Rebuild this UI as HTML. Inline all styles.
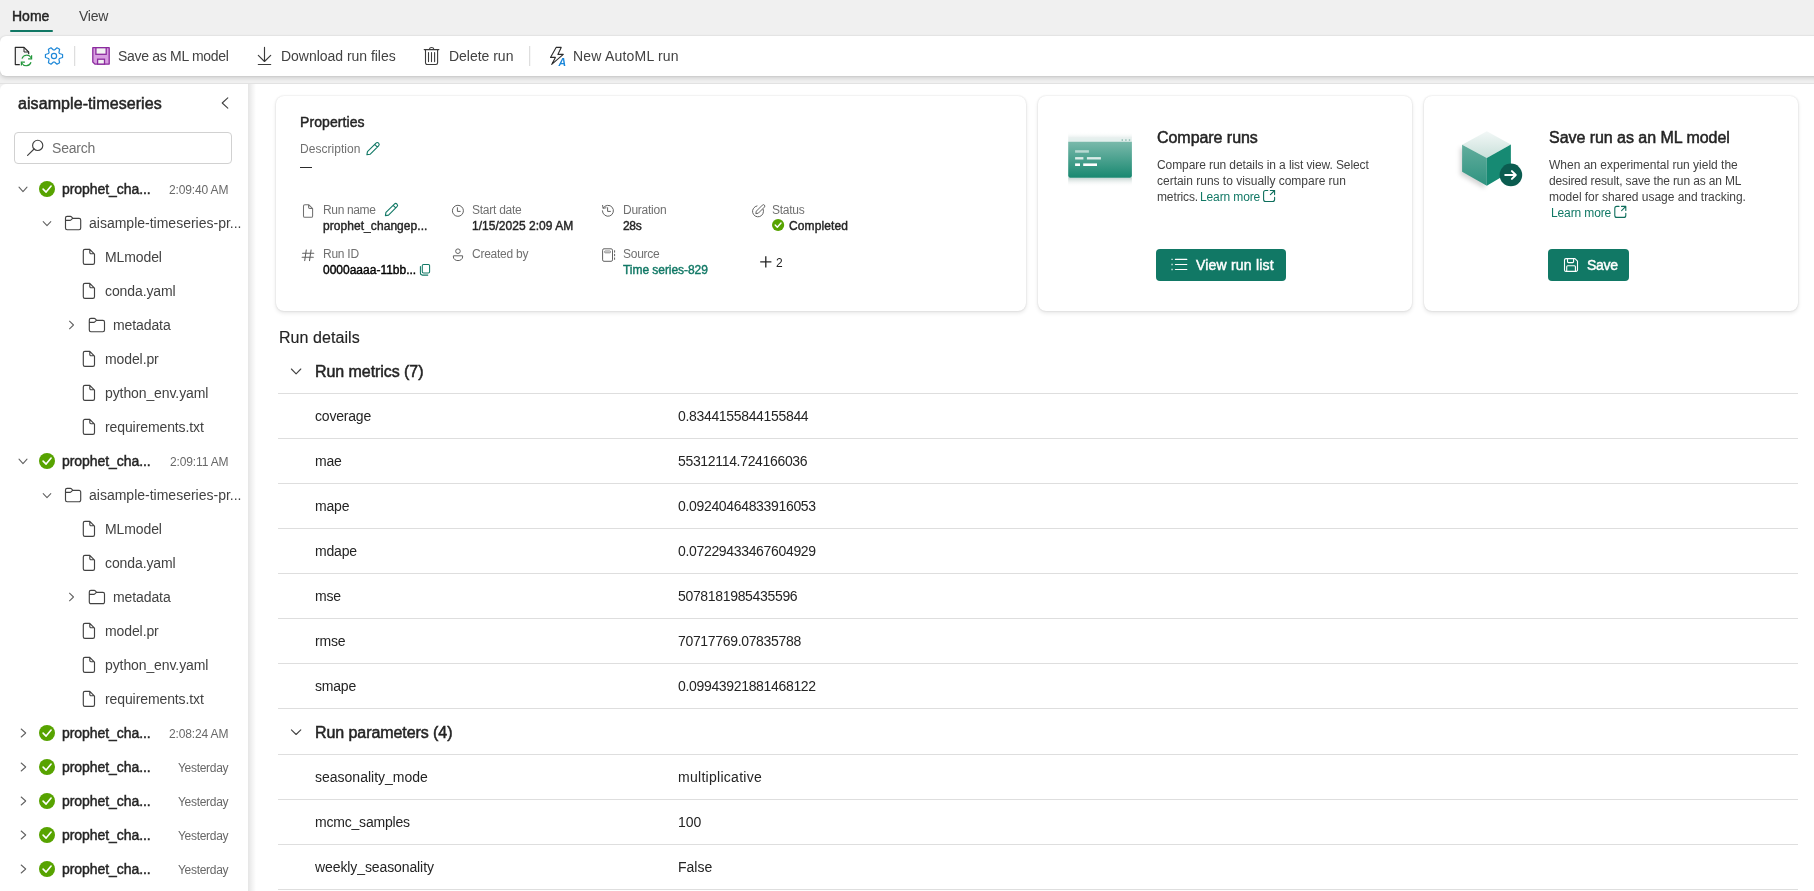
<!DOCTYPE html>
<html><head><meta charset="utf-8">
<style>
*{box-sizing:border-box;margin:0;padding:0}
html,body{width:1814px;height:891px;overflow:hidden;background:#f0f0f0;font-family:"Liberation Sans",sans-serif;color:#242424}
.a{position:absolute}
.t{position:absolute;line-height:1;white-space:nowrap;will-change:transform}
#ov{position:absolute;left:0;top:0;width:1814px;height:891px;overflow:visible}
#toolbar{position:absolute;left:0;top:36px;width:1840px;height:40px;background:#fff;border-radius:6px 0 0 6px;box-shadow:0 0 2px rgba(0,0,0,.12),0 2px 4px rgba(0,0,0,.14)}
#side{position:absolute;left:0;top:84px;width:248px;height:807px;background:#fff;border-top-left-radius:6px}
#main{position:absolute;left:248px;top:84px;width:1566px;height:807px;background:#fff}
#mainshadow{position:absolute;left:248px;top:84px;width:8px;height:807px;background:linear-gradient(to right,rgba(0,0,0,.10),rgba(0,0,0,0))}
.card{position:absolute;top:96px;height:215px;background:#fff;border-radius:8px;box-shadow:0 0 2px rgba(0,0,0,.14),0 2px 4px rgba(0,0,0,.10)}
.tb{font-size:14px;color:#424242;top:49px;letter-spacing:-0.2px}
.tr{font-size:14px;color:#424242;letter-spacing:-0.1px}
.rb{font-size:14px;-webkit-text-stroke-width:0.45px;color:#242424;letter-spacing:-0.06px}
.ts{font-size:12px;color:#686868;letter-spacing:-0.2px}
.line{position:absolute;left:278px;width:1520px;height:1px;background:#dedede}
.lbl{font-size:12px;color:#707070;letter-spacing:-0.25px}
.val{font-size:12px;-webkit-text-stroke-width:0.4px;color:#242424;letter-spacing:0px}
.mk{font-size:14px;color:#242424;letter-spacing:-0.2px}
.btn{position:absolute;top:249px;height:32px;background:#117865;border-radius:4px}
.bt{font-size:14px;-webkit-text-stroke-width:0.45px;color:#fff;letter-spacing:0px}
.desc{font-size:12px;color:#424242}
.lnk{color:#117865}
</style></head><body>
<!-- tabs -->
<div class="t" style="left:12px;top:9px;font-size:14px;-webkit-text-stroke-width:0.45px;color:#242424;letter-spacing:0px">Home</div>
<div class="t" style="left:79px;top:9px;font-size:14px;color:#424242;letter-spacing:-0.25px">View</div>
<div class="a" style="left:10px;top:29.5px;width:43px;height:2.5px;background:#117865;border-radius:2px"></div>

<div id="toolbar"></div>
<div id="side"></div>
<div id="main"></div>
<div id="mainshadow"></div>
<div class="a" style="left:0;top:83px;width:1814px;height:1px;background:rgba(0,0,0,.055)"></div>

<!-- toolbar text -->
<div class="t tb" style="left:117.5px;letter-spacing:-0.3px">Save as ML model</div>
<div class="t tb" style="left:281px;letter-spacing:-0.03px">Download run files</div>
<div class="t tb" style="left:449px;letter-spacing:-0.02px">Delete run</div>
<div class="t tb" style="left:573px;letter-spacing:0.2px">New AutoML run</div>

<!-- sidebar -->
<div class="t" style="left:18px;top:96px;font-size:16px;-webkit-text-stroke-width:0.5px;color:#242424;letter-spacing:0.08px">aisample-timeseries</div>
<div class="a" style="left:14px;top:132px;width:218px;height:32px;border:1px solid #d1d1d1;border-radius:4px;background:#fff"></div>
<div class="t" style="left:51.5px;top:140.8px;font-size:14px;color:#707070;letter-spacing:-0.2px">Search</div>

<div class="t rb" style="left:61.6px;top:181.65px">prophet_cha...</div>
<div class="t ts" style="right:1585.7px;top:183.55px;letter-spacing:-0.14px">2:09:40 AM</div>
<div class="t tr" style="left:89.2px;top:215.65px;letter-spacing:0px">aisample-timeseries-pr...</div>
<div class="t tr" style="left:105.3px;top:249.65px">MLmodel</div>
<div class="t tr" style="left:105.3px;top:283.65px">conda.yaml</div>
<div class="t tr" style="left:113.4px;top:317.65px">metadata</div>
<div class="t tr" style="left:105.3px;top:351.65px">model.pr</div>
<div class="t tr" style="left:105.3px;top:385.65px">python_env.yaml</div>
<div class="t tr" style="left:105.3px;top:419.65px">requirements.txt</div>
<div class="t rb" style="left:61.6px;top:453.65px">prophet_cha...</div>
<div class="t ts" style="right:1585.7px;top:455.55px;letter-spacing:-0.14px">2:09:11 AM</div>
<div class="t tr" style="left:89.2px;top:487.65px;letter-spacing:0px">aisample-timeseries-pr...</div>
<div class="t tr" style="left:105.3px;top:521.65px">MLmodel</div>
<div class="t tr" style="left:105.3px;top:555.65px">conda.yaml</div>
<div class="t tr" style="left:113.4px;top:589.65px">metadata</div>
<div class="t tr" style="left:105.3px;top:623.65px">model.pr</div>
<div class="t tr" style="left:105.3px;top:657.65px">python_env.yaml</div>
<div class="t tr" style="left:105.3px;top:691.65px">requirements.txt</div>
<div class="t rb" style="left:61.6px;top:725.65px">prophet_cha...</div>
<div class="t ts" style="right:1585.7px;top:727.55px;letter-spacing:-0.14px">2:08:24 AM</div>
<div class="t rb" style="left:61.6px;top:759.65px">prophet_cha...</div>
<div class="t ts" style="right:1585.7px;top:761.55px;letter-spacing:-0.3px">Yesterday</div>
<div class="t rb" style="left:61.6px;top:793.65px">prophet_cha...</div>
<div class="t ts" style="right:1585.7px;top:795.55px;letter-spacing:-0.3px">Yesterday</div>
<div class="t rb" style="left:61.6px;top:827.65px">prophet_cha...</div>
<div class="t ts" style="right:1585.7px;top:829.55px;letter-spacing:-0.3px">Yesterday</div>
<div class="t rb" style="left:61.6px;top:861.65px">prophet_cha...</div>
<div class="t ts" style="right:1585.7px;top:863.55px;letter-spacing:-0.3px">Yesterday</div>

<!-- cards -->
<div class="card" style="left:276px;width:750px"></div>
<div class="card" style="left:1038px;width:374px"></div>
<div class="card" style="left:1424px;width:374px"></div>

<!-- properties card -->
<div class="t" style="left:300.3px;top:115.15px;font-size:14px;-webkit-text-stroke-width:0.45px;color:#242424;letter-spacing:0.09px">Properties</div>
<div class="t lbl" style="left:300.3px;top:142.94px;letter-spacing:0.04px">Description</div>
<div class="a" style="left:300px;top:167px;width:12px;height:1.3px;background:#2b2b2b"></div>

<div class="t lbl" style="left:322.6px;top:203.84px;letter-spacing:-0.35px">Run name</div>
<div class="t lbl" style="left:471.9px;top:203.84px">Start date</div>
<div class="t lbl" style="left:622.6px;top:203.84px">Duration</div>
<div class="t lbl" style="left:772px;top:203.84px">Status</div>
<div class="t lbl" style="left:322.6px;top:247.6px">Run ID</div>
<div class="t lbl" style="left:471.9px;top:247.6px">Created by</div>
<div class="t lbl" style="left:622.6px;top:247.6px">Source</div>

<div class="t val" style="left:322.6px;top:219.84px;letter-spacing:0.06px">prophet_changep...</div>
<div class="t val" style="left:471.9px;top:219.84px;letter-spacing:0.03px">1/15/2025 2:09 AM</div>
<div class="t val" style="left:622.6px;top:219.84px;letter-spacing:-0.3px">28s</div>
<div class="t val" style="left:789.3px;top:219.84px;letter-spacing:0.1px">Completed</div>
<div class="t val" style="left:322.6px;top:264px;letter-spacing:0px;color:#000">0000aaaa-11bb...</div>
<div class="t val" style="left:622.6px;top:264px;letter-spacing:-0.05px;color:#117865">Time series-829</div>
<div class="t" style="left:776.3px;top:256.84px;font-size:12px;color:#242424">2</div>

<!-- compare card -->
<div class="t" style="left:1156.7px;top:130.26px;font-size:16px;-webkit-text-stroke-width:0.5px;color:#242424;letter-spacing:-0.05px">Compare runs</div>
<div class="t desc" style="left:1156.7px;top:159.04px;letter-spacing:-0.087px">Compare run details in a list view. Select</div>
<div class="t desc" style="left:1156.7px;top:175.04px;letter-spacing:-0.014px">certain runs to visually compare run</div>
<div class="t desc" style="left:1156.7px;top:191.04px;letter-spacing:-0.125px">metrics.</div>
<div class="t desc lnk" style="left:1199.6px;top:191.04px;letter-spacing:-0.127px">Learn more</div>
<div class="btn" style="left:1156px;width:130px"></div>
<div class="t bt" style="left:1195.8px;top:257.95px;letter-spacing:0.2px">View run list</div>

<!-- save card -->
<div class="t" style="left:1548.6px;top:130.26px;font-size:16px;-webkit-text-stroke-width:0.5px;color:#242424;letter-spacing:-0.04px">Save run as an ML model</div>
<div class="t desc" style="left:1548.6px;top:159.04px;letter-spacing:0px">When an experimental run yield the</div>
<div class="t desc" style="left:1548.6px;top:175.04px;letter-spacing:-0.136px">desired result, save the run as an ML</div>
<div class="t desc" style="left:1548.6px;top:191.04px;letter-spacing:-0.034px">model for shared usage and tracking.</div>
<div class="t desc lnk" style="left:1550.5px;top:206.74px;letter-spacing:-0.127px">Learn more</div>
<div class="btn" style="left:1548px;width:81px"></div>
<div class="t bt" style="left:1587.3px;top:257.95px;letter-spacing:-0.3px">Save</div>

<!-- run details -->
<div class="t" style="left:278.6px;top:330.16px;font-size:16px;color:#242424;-webkit-text-stroke-width:0.15px;letter-spacing:0.06px">Run details</div>
<div class="t" style="left:314.5px;top:364.1px;font-size:16px;-webkit-text-stroke-width:0.5px;color:#242424;letter-spacing:-0.06px">Run metrics (7)</div>
<div class="line" style="top:393px"></div>
<div class="line" style="top:438px"></div>
<div class="line" style="top:483px"></div>
<div class="line" style="top:528px"></div>
<div class="line" style="top:573px"></div>
<div class="line" style="top:618px"></div>
<div class="line" style="top:663px"></div>
<div class="line" style="top:708px"></div>
<div class="line" style="top:754px"></div>
<div class="line" style="top:799px"></div>
<div class="line" style="top:844px"></div>
<div class="line" style="top:889px"></div>
<div class="t mk" style="left:314.5px;top:409.00px">coverage</div>
<div class="t mk" style="left:678.4px;top:409.00px;letter-spacing:-0.33px">0.8344155844155844</div>
<div class="t mk" style="left:314.5px;top:454.00px">mae</div>
<div class="t mk" style="left:678.4px;top:454.00px;letter-spacing:-0.33px">55312114.724166036</div>
<div class="t mk" style="left:314.5px;top:499.00px">mape</div>
<div class="t mk" style="left:678.4px;top:499.00px;letter-spacing:-0.33px">0.09240464833916053</div>
<div class="t mk" style="left:314.5px;top:544.00px">mdape</div>
<div class="t mk" style="left:678.4px;top:544.00px;letter-spacing:-0.33px">0.07229433467604929</div>
<div class="t mk" style="left:314.5px;top:589.00px">mse</div>
<div class="t mk" style="left:678.4px;top:589.00px;letter-spacing:-0.33px">5078181985435596</div>
<div class="t mk" style="left:314.5px;top:634.00px">rmse</div>
<div class="t mk" style="left:678.4px;top:634.00px;letter-spacing:-0.33px">70717769.07835788</div>
<div class="t mk" style="left:314.5px;top:679.00px">smape</div>
<div class="t mk" style="left:678.4px;top:679.00px;letter-spacing:-0.33px">0.09943921881468122</div>
<div class="t" style="left:314.5px;top:725.3px;font-size:16px;-webkit-text-stroke-width:0.5px;color:#242424;letter-spacing:-0.07px">Run parameters (4)</div>
<div class="t mk" style="left:314.5px;top:770.00px;letter-spacing:0px">seasonality_mode</div>
<div class="t mk" style="left:678.4px;top:770.00px;letter-spacing:0.28px">multiplicative</div>
<div class="t mk" style="left:314.5px;top:815.00px;letter-spacing:-0.2px">mcmc_samples</div>
<div class="t mk" style="left:678.4px;top:815.00px;letter-spacing:0px">100</div>
<div class="t mk" style="left:314.5px;top:860.00px;letter-spacing:-0.1px">weekly_seasonality</div>
<div class="t mk" style="left:678.4px;top:860.00px;letter-spacing:0px">False</div>


<svg id="ov" width="1814" height="891" viewBox="0 0 1814 891"><path d="M19.8 64.6 H15.3 V47.3 H24 L28.7 52 V54.2" fill="#f7f7f7" stroke="#2b2b2b" stroke-width="1.2" stroke-linejoin="round"/>
<path d="M24 47.3 V52 H28.7" fill="none" stroke="#2b2b2b" stroke-width="1" stroke-linejoin="round"/>
<path d="M22 58.6 A5 5 0 0 1 31.1 57.8" fill="none" stroke="#22973b" stroke-width="1.2"/>
<path d="M31.6 55.2 V58.8 H28.1" fill="none" stroke="#22973b" stroke-width="1.2"/>
<path d="M31 62.3 A5 5 0 0 1 21.9 63.2" fill="none" stroke="#22973b" stroke-width="1.2"/>
<path d="M21.4 65.6 V62.1 H24.9" fill="none" stroke="#22973b" stroke-width="1.2"/>
<path d="M59.44 53.46 L62.57 54.49 L62.57 57.51 L59.44 58.54 L58.91 59.44 L59.59 62.66 L56.98 64.18 L54.52 61.98 L53.48 61.98 L51.02 64.18 L48.41 62.66 L49.09 59.44 L48.56 58.54 L45.43 57.51 L45.43 54.49 L48.56 53.46 L49.09 52.56 L48.41 49.34 L51.02 47.82 L53.48 50.02 L54.52 50.02 L56.98 47.82 L59.59 49.34 L58.91 52.56Z" fill="none" stroke="#1e88d8" stroke-width="1.2" stroke-linejoin="round"/>
<circle cx="54" cy="56" r="2.6" fill="none" stroke="#1e88d8" stroke-width="1.2"/>
<rect x="74.2" y="46" width="1" height="20" fill="#d6d6d6"/>
<rect x="529.2" y="46" width="1" height="20" fill="#d6d6d6"/>
<path d="M92.8 47.7 H109.2 V64.1 H94.9 L92.8 62 Z" fill="#d89ee1" stroke="#8b2a9e" stroke-width="1.3" stroke-linejoin="round"/>
<rect x="95.9" y="47.7" width="10.3" height="6.6" fill="#f2f2f2" stroke="#8b2a9e" stroke-width="1.3"/>
<rect x="97.6" y="59.2" width="6.9" height="4.9" fill="#f2f2f2" stroke="#8b2a9e" stroke-width="1.3"/>
<path d="M264.5 47.4 V61.4 M258.3 55.3 L264.5 61.5 L270.7 55.3 M258.3 64.5 H270.7" fill="none" stroke="#3b3b3b" stroke-width="1.15" stroke-linecap="round" stroke-linejoin="round"/>
<path d="M424.2 49.6 H438.9 M429.3 49.4 A2.35 2.3 0 0 1 433.9 49.4 M425.5 49.6 V62.8 A1.7 1.7 0 0 0 427.2 64.5 H435.9 A1.7 1.7 0 0 0 437.6 62.8 V49.6 M428.5 52.5 V61.6 M431.5 52.5 V61.6 M434.6 52.5 V61.6" fill="none" stroke="#3b3b3b" stroke-width="1.1" stroke-linecap="round" stroke-linejoin="round"/>
<path d="M556.1 47.4 H561.2 L557.9 54.4 H563.3 L551.7 64.4 L555.4 57.4 H550.5 Z" fill="#fafafa" stroke="#2b2b2b" stroke-width="1.1" stroke-linejoin="round"/>
<text x="558.5" y="65.9" font-family="Liberation Sans" font-weight="bold" font-style="italic" font-size="10.5" fill="#1a86d9">A</text>
<circle cx="47.00" cy="189.00" r="8.00" fill="#57a300"/><path d="M43.10 189.10 L46.10 192.10 L51.10 186.10" fill="none" stroke="#fff" stroke-width="1.60" stroke-linecap="round" stroke-linejoin="round"/>
<path d="M19.00 187.10 L23.00 191.70 L27.00 187.10" fill="none" stroke="#616161" stroke-width="1.05" stroke-linecap="round" stroke-linejoin="round"/>
<path d="M43.20 221.60 L47.00 225.60 L50.80 221.60" fill="none" stroke="#616161" stroke-width="1.05" stroke-linecap="round" stroke-linejoin="round"/>
<path d="M65.50 218.00 a1.6 1.6 0 0 1 1.6 -1.6 h3.3 a1.5 1.5 0 0 1 1.1 .5 l1.4 1.5 h6.2 a1.6 1.6 0 0 1 1.6 1.6 v8.1 a1.6 1.6 0 0 1 -1.6 1.6 h-12 a1.6 1.6 0 0 1 -1.6 -1.6 z M65.50 220.40 h4.5 a1.4 1.4 0 0 0 1 -.45 l1.9 -1.75" fill="none" stroke="#424242" stroke-width="1.15" stroke-linejoin="round"/>
<path d="M84.90 249.40 h4.9 l4.7 4.7 v8.7 a1.6 1.6 0 0 1 -1.6 1.6 h-8 a1.6 1.6 0 0 1 -1.6 -1.6 v-11.8 a1.6 1.6 0 0 1 1.6 -1.6 z M89.80 249.40 v3.1 a1.2 1.2 0 0 0 1.2 1.2 h3.5" fill="none" stroke="#424242" stroke-width="1.15" stroke-linejoin="round"/>
<path d="M84.90 283.40 h4.9 l4.7 4.7 v8.7 a1.6 1.6 0 0 1 -1.6 1.6 h-8 a1.6 1.6 0 0 1 -1.6 -1.6 v-11.8 a1.6 1.6 0 0 1 1.6 -1.6 z M89.80 283.40 v3.1 a1.2 1.2 0 0 0 1.2 1.2 h3.5" fill="none" stroke="#424242" stroke-width="1.15" stroke-linejoin="round"/>
<path d="M69.50 321.20 L73.50 325.00 L69.50 328.80" fill="none" stroke="#616161" stroke-width="1.05" stroke-linecap="round" stroke-linejoin="round"/>
<path d="M89.30 320.00 a1.6 1.6 0 0 1 1.6 -1.6 h3.3 a1.5 1.5 0 0 1 1.1 .5 l1.4 1.5 h6.2 a1.6 1.6 0 0 1 1.6 1.6 v8.1 a1.6 1.6 0 0 1 -1.6 1.6 h-12 a1.6 1.6 0 0 1 -1.6 -1.6 z M89.30 322.40 h4.5 a1.4 1.4 0 0 0 1 -.45 l1.9 -1.75" fill="none" stroke="#424242" stroke-width="1.15" stroke-linejoin="round"/>
<path d="M84.90 351.40 h4.9 l4.7 4.7 v8.7 a1.6 1.6 0 0 1 -1.6 1.6 h-8 a1.6 1.6 0 0 1 -1.6 -1.6 v-11.8 a1.6 1.6 0 0 1 1.6 -1.6 z M89.80 351.40 v3.1 a1.2 1.2 0 0 0 1.2 1.2 h3.5" fill="none" stroke="#424242" stroke-width="1.15" stroke-linejoin="round"/>
<path d="M84.90 385.40 h4.9 l4.7 4.7 v8.7 a1.6 1.6 0 0 1 -1.6 1.6 h-8 a1.6 1.6 0 0 1 -1.6 -1.6 v-11.8 a1.6 1.6 0 0 1 1.6 -1.6 z M89.80 385.40 v3.1 a1.2 1.2 0 0 0 1.2 1.2 h3.5" fill="none" stroke="#424242" stroke-width="1.15" stroke-linejoin="round"/>
<path d="M84.90 419.40 h4.9 l4.7 4.7 v8.7 a1.6 1.6 0 0 1 -1.6 1.6 h-8 a1.6 1.6 0 0 1 -1.6 -1.6 v-11.8 a1.6 1.6 0 0 1 1.6 -1.6 z M89.80 419.40 v3.1 a1.2 1.2 0 0 0 1.2 1.2 h3.5" fill="none" stroke="#424242" stroke-width="1.15" stroke-linejoin="round"/>
<circle cx="47.00" cy="461.00" r="8.00" fill="#57a300"/><path d="M43.10 461.10 L46.10 464.10 L51.10 458.10" fill="none" stroke="#fff" stroke-width="1.60" stroke-linecap="round" stroke-linejoin="round"/>
<path d="M19.00 459.10 L23.00 463.70 L27.00 459.10" fill="none" stroke="#616161" stroke-width="1.05" stroke-linecap="round" stroke-linejoin="round"/>
<path d="M43.20 493.60 L47.00 497.60 L50.80 493.60" fill="none" stroke="#616161" stroke-width="1.05" stroke-linecap="round" stroke-linejoin="round"/>
<path d="M65.50 490.00 a1.6 1.6 0 0 1 1.6 -1.6 h3.3 a1.5 1.5 0 0 1 1.1 .5 l1.4 1.5 h6.2 a1.6 1.6 0 0 1 1.6 1.6 v8.1 a1.6 1.6 0 0 1 -1.6 1.6 h-12 a1.6 1.6 0 0 1 -1.6 -1.6 z M65.50 492.40 h4.5 a1.4 1.4 0 0 0 1 -.45 l1.9 -1.75" fill="none" stroke="#424242" stroke-width="1.15" stroke-linejoin="round"/>
<path d="M84.90 521.40 h4.9 l4.7 4.7 v8.7 a1.6 1.6 0 0 1 -1.6 1.6 h-8 a1.6 1.6 0 0 1 -1.6 -1.6 v-11.8 a1.6 1.6 0 0 1 1.6 -1.6 z M89.80 521.40 v3.1 a1.2 1.2 0 0 0 1.2 1.2 h3.5" fill="none" stroke="#424242" stroke-width="1.15" stroke-linejoin="round"/>
<path d="M84.90 555.40 h4.9 l4.7 4.7 v8.7 a1.6 1.6 0 0 1 -1.6 1.6 h-8 a1.6 1.6 0 0 1 -1.6 -1.6 v-11.8 a1.6 1.6 0 0 1 1.6 -1.6 z M89.80 555.40 v3.1 a1.2 1.2 0 0 0 1.2 1.2 h3.5" fill="none" stroke="#424242" stroke-width="1.15" stroke-linejoin="round"/>
<path d="M69.50 593.20 L73.50 597.00 L69.50 600.80" fill="none" stroke="#616161" stroke-width="1.05" stroke-linecap="round" stroke-linejoin="round"/>
<path d="M89.30 592.00 a1.6 1.6 0 0 1 1.6 -1.6 h3.3 a1.5 1.5 0 0 1 1.1 .5 l1.4 1.5 h6.2 a1.6 1.6 0 0 1 1.6 1.6 v8.1 a1.6 1.6 0 0 1 -1.6 1.6 h-12 a1.6 1.6 0 0 1 -1.6 -1.6 z M89.30 594.40 h4.5 a1.4 1.4 0 0 0 1 -.45 l1.9 -1.75" fill="none" stroke="#424242" stroke-width="1.15" stroke-linejoin="round"/>
<path d="M84.90 623.40 h4.9 l4.7 4.7 v8.7 a1.6 1.6 0 0 1 -1.6 1.6 h-8 a1.6 1.6 0 0 1 -1.6 -1.6 v-11.8 a1.6 1.6 0 0 1 1.6 -1.6 z M89.80 623.40 v3.1 a1.2 1.2 0 0 0 1.2 1.2 h3.5" fill="none" stroke="#424242" stroke-width="1.15" stroke-linejoin="round"/>
<path d="M84.90 657.40 h4.9 l4.7 4.7 v8.7 a1.6 1.6 0 0 1 -1.6 1.6 h-8 a1.6 1.6 0 0 1 -1.6 -1.6 v-11.8 a1.6 1.6 0 0 1 1.6 -1.6 z M89.80 657.40 v3.1 a1.2 1.2 0 0 0 1.2 1.2 h3.5" fill="none" stroke="#424242" stroke-width="1.15" stroke-linejoin="round"/>
<path d="M84.90 691.40 h4.9 l4.7 4.7 v8.7 a1.6 1.6 0 0 1 -1.6 1.6 h-8 a1.6 1.6 0 0 1 -1.6 -1.6 v-11.8 a1.6 1.6 0 0 1 1.6 -1.6 z M89.80 691.40 v3.1 a1.2 1.2 0 0 0 1.2 1.2 h3.5" fill="none" stroke="#424242" stroke-width="1.15" stroke-linejoin="round"/>
<circle cx="47.00" cy="733.00" r="8.00" fill="#57a300"/><path d="M43.10 733.10 L46.10 736.10 L51.10 730.10" fill="none" stroke="#fff" stroke-width="1.60" stroke-linecap="round" stroke-linejoin="round"/>
<path d="M21.20 729.00 L25.70 733.00 L21.20 737.00" fill="none" stroke="#616161" stroke-width="1.05" stroke-linecap="round" stroke-linejoin="round"/>
<circle cx="47.00" cy="767.00" r="8.00" fill="#57a300"/><path d="M43.10 767.10 L46.10 770.10 L51.10 764.10" fill="none" stroke="#fff" stroke-width="1.60" stroke-linecap="round" stroke-linejoin="round"/>
<path d="M21.20 763.00 L25.70 767.00 L21.20 771.00" fill="none" stroke="#616161" stroke-width="1.05" stroke-linecap="round" stroke-linejoin="round"/>
<circle cx="47.00" cy="801.00" r="8.00" fill="#57a300"/><path d="M43.10 801.10 L46.10 804.10 L51.10 798.10" fill="none" stroke="#fff" stroke-width="1.60" stroke-linecap="round" stroke-linejoin="round"/>
<path d="M21.20 797.00 L25.70 801.00 L21.20 805.00" fill="none" stroke="#616161" stroke-width="1.05" stroke-linecap="round" stroke-linejoin="round"/>
<circle cx="47.00" cy="835.00" r="8.00" fill="#57a300"/><path d="M43.10 835.10 L46.10 838.10 L51.10 832.10" fill="none" stroke="#fff" stroke-width="1.60" stroke-linecap="round" stroke-linejoin="round"/>
<path d="M21.20 831.00 L25.70 835.00 L21.20 839.00" fill="none" stroke="#616161" stroke-width="1.05" stroke-linecap="round" stroke-linejoin="round"/>
<circle cx="47.00" cy="869.00" r="8.00" fill="#57a300"/><path d="M43.10 869.10 L46.10 872.10 L51.10 866.10" fill="none" stroke="#fff" stroke-width="1.60" stroke-linecap="round" stroke-linejoin="round"/>
<path d="M21.20 865.00 L25.70 869.00 L21.20 873.00" fill="none" stroke="#616161" stroke-width="1.05" stroke-linecap="round" stroke-linejoin="round"/>
<path d="M227.8 97.9 L222.2 103 L227.8 108.1" fill="none" stroke="#424242" stroke-width="1.1" stroke-linecap="round" stroke-linejoin="round"/>
<circle cx="37.7" cy="145.4" r="5.1" fill="none" stroke="#424242" stroke-width="1.15"/><path d="M34.1 149 L27.6 155.4" stroke="#424242" stroke-width="1.2" stroke-linecap="round"/><path transform="translate(366.90 154.80) rotate(-44.75)" d="M0 0 L2.6 -1.85 H14.63 A1.85 1.85 0 0 1 14.63 1.85 H2.6 Z M12.88 -1.85 V1.85" fill="none" stroke="#117865" stroke-width="1.10" stroke-linejoin="round"/>
<path transform="translate(385.40 215.60) rotate(-44.75)" d="M0 0 L2.6 -1.85 H14.48 A1.85 1.85 0 0 1 14.48 1.85 H2.6 Z M12.73 -1.85 V1.85" fill="none" stroke="#117865" stroke-width="1.10" stroke-linejoin="round"/>
<path d="M305.00 204.70 h3.6 l4 4 v7.2 a1.4 1.4 0 0 1 -1.4 1.4 h-6.3 a1.4 1.4 0 0 1 -1.4 -1.4 v-9.8 a1.4 1.4 0 0 1 1.4 -1.4 z M308.60 204.70 v2.6 a1.1 1.1 0 0 0 1.1 1.1 h2.9" fill="none" stroke="#707070" stroke-width="1.05" stroke-linejoin="round"/>
<circle cx="457.9" cy="210.8" r="5.5" fill="none" stroke="#616161" stroke-width="1"/><path d="M457.4 207.7 V211.4 H460.2" fill="none" stroke="#616161" stroke-width="1" stroke-linecap="round" stroke-linejoin="round"/>
<path d="M603.2 207.9 A5.5 5.5 0 1 1 602.4 210.8" fill="none" stroke="#616161" stroke-width="1" stroke-linecap="round"/><path d="M602.6 205.4 L603.1 208.3 L606 207.8" fill="none" stroke="#616161" stroke-width="1" stroke-linecap="round" stroke-linejoin="round"/><path d="M607.6 207.7 V211.4 H610.4" fill="none" stroke="#616161" stroke-width="1" stroke-linecap="round" stroke-linejoin="round"/>
<path d="M763.2 209.4 A5.5 5.5 0 1 1 757.0 205.9" fill="none" stroke="#616161" stroke-width="1" stroke-linecap="round"/>
<path d="M755.8 213.7 L756.3 211.2 L762.4 205.1 A1.4 1.4 0 0 1 764.4 207.1 L758.3 213.2 Z" fill="#fff" stroke="#616161" stroke-width="1" stroke-linejoin="round"/>
<path d="M306.3 249.9 L304.7 260.6 M311.1 249.9 L309.5 260.6 M302.6 253.3 H313.8 M302.1 257.3 H313.3" fill="none" stroke="#616161" stroke-width="1.05" stroke-linecap="round"/>
<circle cx="457.95" cy="251.2" r="2.3" fill="none" stroke="#616161" stroke-width="1"/><path d="M453.4 255.8 H462.6 V257 A4.6 3.6 0 0 1 453.4 257 Z" fill="none" stroke="#616161" stroke-width="1" stroke-linejoin="round"/>
<rect x="602.6" y="248.8" width="9.9" height="12.5" rx="1.4" fill="none" stroke="#616161" stroke-width="1"/><rect x="604.6" y="251" width="5.9" height="1.8" rx=".7" fill="none" stroke="#616161" stroke-width=".75"/><path d="M614.6 250.7 V252.2 M614.6 254.3 V255.8 M614.6 257.9 V259.4" stroke="#616161" stroke-width="1" stroke-linecap="round"/>
<rect x="422.3" y="264.4" width="7.3" height="8.6" rx="1.2" fill="none" stroke="#117865" stroke-width="1.05"/><path d="M420.4 266.5 V273.1 A2 2 0 0 0 422.4 275.1 H427.8" fill="none" stroke="#117865" stroke-width="1.05" stroke-linecap="round"/>
<circle cx="778.1" cy="225" r="6.1" fill="#57a300"/><path d="M775.2 225.1 L777.3 227.2 L781 223" fill="none" stroke="#fff" stroke-width="1.4" stroke-linecap="round" stroke-linejoin="round"/>
<path d="M765.8 256.2 V267.4 M760.2 261.8 H771.4" stroke="#242424" stroke-width="1.3"/>
<path d="M1267.80 190.50 H1265.60 A2 2 0 0 0 1263.60 192.50 V199.50 A2 2 0 0 0 1265.60 201.50 H1272.60 A2 2 0 0 0 1274.60 199.50 V197.40" fill="none" stroke="#0e6e5c" stroke-width="1.1" stroke-linecap="round"/><path d="M1270.30 190.50 H1274.60 V194.60 M1274.60 190.50 L1270.40 194.70" fill="none" stroke="#0e6e5c" stroke-width="1.1" stroke-linecap="round" stroke-linejoin="round"/>
<path d="M1619.00 206.40 H1616.80 A2 2 0 0 0 1614.80 208.40 V215.40 A2 2 0 0 0 1616.80 217.40 H1623.80 A2 2 0 0 0 1625.80 215.40 V213.30" fill="none" stroke="#0e6e5c" stroke-width="1.1" stroke-linecap="round"/><path d="M1621.50 206.40 H1625.80 V210.50 M1625.80 206.40 L1621.60 210.60" fill="none" stroke="#0e6e5c" stroke-width="1.1" stroke-linecap="round" stroke-linejoin="round"/>
<path d="M291.4 369 L296.1 373.8 L300.8 369" fill="none" stroke="#424242" stroke-width="1.1" stroke-linecap="round" stroke-linejoin="round"/>
<path d="M291.4 729.8 L296.1 734.5 L300.8 729.8" fill="none" stroke="#424242" stroke-width="1.1" stroke-linecap="round" stroke-linejoin="round"/>
<path d="M1171.5 259.4 H1172.6 M1171.5 264.5 H1172.6 M1171.5 269.5 H1172.6" stroke="#fff" stroke-width="1.4"/><path d="M1175.4 259.4 H1186.8 M1175.4 264.5 H1186.8 M1175.4 269.5 H1186.8" stroke="#fff" stroke-width="1.15" stroke-linecap="round"/>
<path d="M1566 258.6 H1575 L1577.5 261.1 V269.9 A1.5 1.5 0 0 1 1576 271.4 H1566 A1.5 1.5 0 0 1 1564.5 269.9 V260.1 A1.5 1.5 0 0 1 1566 258.6 Z" fill="none" stroke="#fff" stroke-width="1.1" stroke-linejoin="round"/><path d="M1567.5 258.6 V261.6 A1 1 0 0 0 1568.5 262.6 H1572.6 A1 1 0 0 0 1573.6 261.6 V258.6 M1566.7 271.4 V266.7 A1 1 0 0 1 1567.7 265.7 H1574.4 A1 1 0 0 1 1575.4 266.7 V271.4" fill="none" stroke="#fff" stroke-width="1.1"/>
<defs>
<linearGradient id="gwin" x1="0" y1="0" x2="0" y2="1"><stop offset="0" stop-color="#7ab9ab"/><stop offset="1" stop-color="#188870"/></linearGradient>
<linearGradient id="gsh" x1="0" y1="0" x2="0" y2="1"><stop offset="0" stop-color="#b9cbc7" stop-opacity=".9"/><stop offset="1" stop-color="#fff" stop-opacity="0"/></linearGradient>
<linearGradient id="gsh2" x1="0" y1="1" x2="0" y2="0"><stop offset="0" stop-color="#dfe9e7" stop-opacity=".8"/><stop offset="1" stop-color="#fff" stop-opacity="0"/></linearGradient>
<linearGradient id="gtop" x1="0" y1="0" x2="0" y2="1"><stop offset="0" stop-color="#f3f8f7"/><stop offset="1" stop-color="#c9e0da"/></linearGradient>
<linearGradient id="gleft" x1="0" y1="0" x2="0" y2="1"><stop offset="0" stop-color="#62ad9d"/><stop offset="1" stop-color="#2f9380"/></linearGradient>
<linearGradient id="gcsh" x1="0" y1="0" x2="1" y2="1"><stop offset="0" stop-color="#000" stop-opacity=".12"/><stop offset="1" stop-color="#000" stop-opacity="0"/></linearGradient>
<filter id="blur2" x="-50%" y="-50%" width="200%" height="200%"><feGaussianBlur stdDeviation="2"/></filter>
</defs>
<rect x="1068.2" y="132" width="63.7" height="6" fill="url(#gsh2)"/>
<rect x="1068.2" y="177.5" width="63.7" height="9" fill="url(#gsh)"/>
<rect x="1068.2" y="138.1" width="63.7" height="3.8" fill="#e4efed"/>
<path d="M1068.2 141.8 H1131.9 V175.8 A2 2 0 0 1 1129.9 177.8 H1070.2 A2 2 0 0 1 1068.2 175.8 Z" fill="url(#gwin)"/>
<rect x="1121.6" y="139.4" width="1.4" height="1.3" fill="#7fb2a6"/><rect x="1125.2" y="139.4" width="1.4" height="1.3" fill="#7fb2a6"/><rect x="1128.8" y="139.4" width="1.4" height="1.3" fill="#7fb2a6"/>
<rect x="1075.1" y="150.2" width="13.8" height="2.5" fill="#fff" fill-opacity=".55"/>
<rect x="1075.1" y="157.1" width="8.3" height="2.4" fill="#fff" fill-opacity=".8"/><rect x="1086.9" y="157.1" width="14" height="2.4" fill="#fff" fill-opacity=".8"/>
<rect x="1075.1" y="163.4" width="4.9" height="2.6" fill="#fff"/><rect x="1083.2" y="163.4" width="13.8" height="2.6" fill="#fff"/>
<path d="M1460 147 L1484.8 160 V188.8 L1460 174.7 Z" fill="#000" fill-opacity=".16" filter="url(#blur2)"/>
<path d="M1486.8 131.3 L1510.9 144.4 L1486.8 158 L1462.1 144.8 Z" fill="url(#gtop)"/>
<path d="M1462.1 144.8 L1486.8 158 V185.8 L1462.1 171.7 Z" fill="url(#gleft)"/>
<path d="M1486.8 158 L1510.9 144.4 V171.4 L1486.8 185.8 Z" fill="#168a73"/>
<circle cx="1510.9" cy="174.9" r="11.3" fill="#0b5c50"/>
<path d="M1505.2 175 H1515.8 M1511.9 171.1 L1515.8 175 L1511.9 178.9" fill="none" stroke="#fff" stroke-width="2" stroke-linecap="round" stroke-linejoin="round"/></svg>
</body></html>
